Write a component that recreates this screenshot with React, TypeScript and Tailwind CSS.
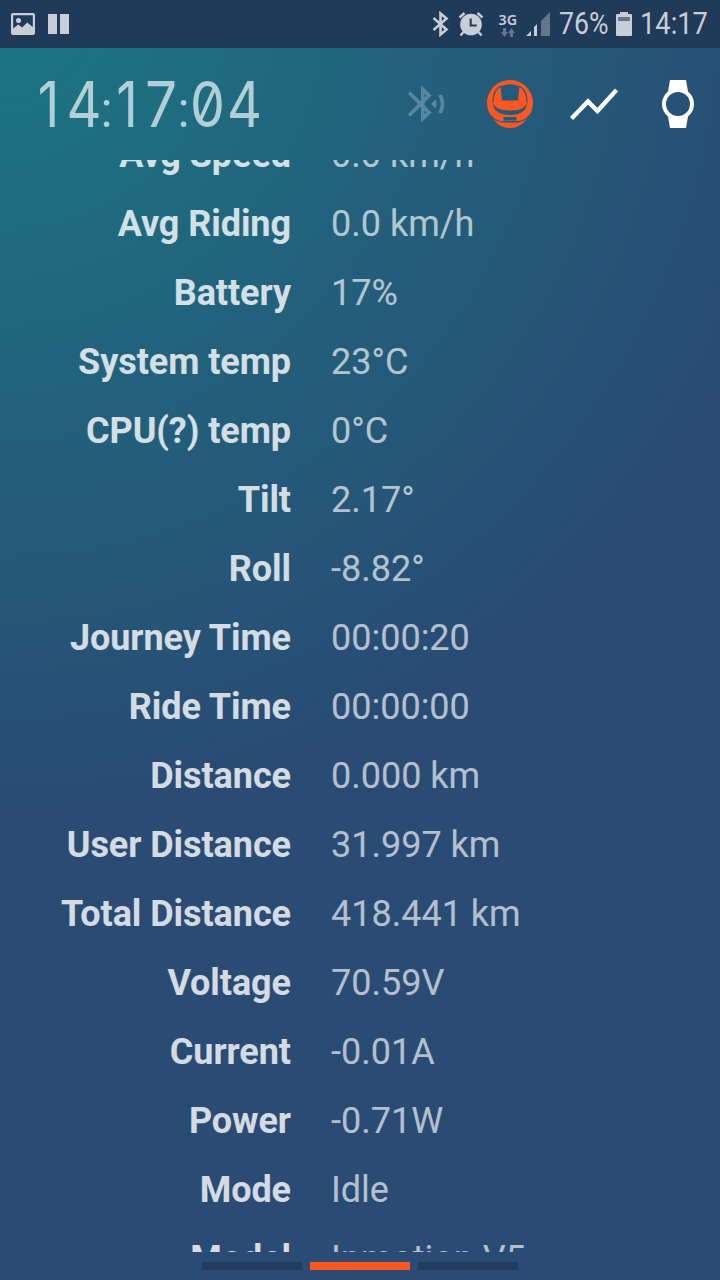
import type { ReactNode } from "react";

const ROWS = [
  ["Avg Speed", "0.0 km/h"],
  ["Avg Riding", "0.0 km/h"],
  ["Battery", "17%"],
  ["System temp", "23°C"],
  ["CPU(?) temp", "0°C"],
  ["Tilt", "2.17°"],
  ["Roll", "-8.82°"],
  ["Journey Time", "00:00:20"],
  ["Ride Time", "00:00:00"],
  ["Distance", "0.000 km"],
  ["User Distance", "31.997 km"],
  ["Total Distance", "418.441 km"],
  ["Voltage", "70.59V"],
  ["Current", "-0.01A"],
  ["Power", "-0.71W"],
  ["Mode", "Idle"],
  ["Model", "Inmotion V5"],
];

const StatusBar = () => (
  <div className="flex h-12 shrink-0 items-center bg-[#203a5a] pr-[9px] text-[#c8ced7]">
    <svg className="ml-[11px] h-6 w-6" viewBox="0 0 24 24" fill="currentColor">
      <path fillRule="evenodd" d="M2 1h20q2 0 2 2v18q0 2-2 2H2q-2 0-2-2V3q0-2 2-2zM2.200 3.200v13.300l5-4 4 3 5-5 5.600 4.500V3.200z" />
      <circle cx="7.500" cy="8.500" r="2.500" />
    </svg>
    <svg className="ml-[13px] h-5 w-[21px]" viewBox="0 0 21 20" fill="currentColor">
      <path d="M0 0h9v20H0zM12 0h9v20h-9z" />
    </svg>
    <div className="flex-1" />
    <svg className="h-[26px] w-[17px]" viewBox="0 0 17 26" fill="none" stroke="currentColor" strokeWidth="2.600">
      <path d="M1.500 7l13 11.500-6 5V2.500l6 5L1.500 19" />
    </svg>
    <svg className="ml-[9px] h-[26px] w-[26px]" viewBox="0 0 26 26">
      <circle cx="13" cy="13.500" r="10.800" fill="currentColor" />
      <path d="M1.500 6.500l5-4.500M24.500 6.500l-5-4.500M5.500 21l-3 3.500M20.500 21l3 3.500" stroke="currentColor" strokeWidth="2.400" />
      <path d="M12.700 7.500v7h6" fill="none" stroke="#203a5a" strokeWidth="2" />
    </svg>
    <div className="ml-[14px] flex w-5 flex-col items-center">
      <span className="origin-center scale-x-[0.95] font-['Noto_Sans',sans-serif] text-[15px] font-semibold leading-[14px]">3G</span>
      <svg className="mt-0.5 h-[9px] w-4" viewBox="0 0 16 9" fill="#64768c">
        <path d="M3 0h3v4h2L4.500 9 1 4h2zM10 9h3V5h2l-3.500-5L8 5h2z" />
      </svg>
    </div>
    <svg className="ml-[8px] h-6 w-6" viewBox="0 0 24 24" fill="currentColor">
      <path d="M0 24l5-5v5zM8 24V15l3-3v12z" />
      <path d="M15 24V9l9-9v24z" fill="#64768c" />
    </svg>
    <span className="ml-[9px] w-[50px] whitespace-nowrap">
      <span className="inline-block origin-left scale-x-[0.86] text-[31px] leading-[50px]">76%</span>
    </span>
    <svg className="ml-[7px] h-6 w-4" viewBox="0 0 16 24" fill="currentColor">
      <path d="M4 0h8v2h3q1 0 1 1v20q0 1-1 1H1q-1 0-1-1V3q0-1 1-1h3z" />
      <path d="M2 5h12v4H2z" fill="#64768c" />
    </svg>
    <span className="ml-[8px] w-[71px] whitespace-nowrap">
      <span className="inline-block origin-left scale-x-[0.88] text-[31px] leading-[50px]">14:17</span>
    </span>
  </div>
);

const Digit = ({ className, children }: { className: string; children: ReactNode }) => (
  <span className={`flex shrink-0 justify-center ${className}`}>{children}</span>
);

const Colon = ({ className }: { className: string }) => (
  <span className={`flex shrink-0 justify-center font-['Roboto',sans-serif] text-[50px] leading-none ${className}`}>:</span>
);

const Header = () => (
  <div className="flex h-28 shrink-0 items-center text-white">
    <div className="ml-[30px] flex w-[231px] items-baseline font-['Inter',sans-serif] text-[63px] leading-[110px] text-[#b2cfd8] [font-feature-settings:'zero']">
      <Digit className="w-[37px] scale-x-[0.84]">1</Digit>
      <Digit className="w-[34px] scale-x-[0.86]">4</Digit>
      <Colon className="w-[11px]" />
      <Digit className="w-[30px] scale-x-[0.84]">1</Digit>
      <Digit className="w-[38px] scale-x-[0.9]">7</Digit>
      <Colon className="w-[7px]" />
      <Digit className="w-[41px] scale-x-[0.88]">0</Digit>
      <Digit className="w-[33px] scale-x-[0.86]">4</Digit>
    </div>
    <svg className="ml-[146px] h-12 w-10" viewBox="0 0 40 48" fill="none" stroke="#5688a0" strokeWidth="3.600">
      <path d="M2 12.500l20 20-6.200 6V9.300l6.200 6.200-20 20" />
      <path d="M33 15q5 9 0 18" />
      <path d="M24 24l4.500-4.500q2 4.500 0 9z" fill="#5688a0" stroke="none" />
    </svg>
    <svg className="ml-10 h-12 w-[46px]" viewBox="0 0 46 48">
      <circle cx="23" cy="23" r="23" fill="#ff5722" />
      <path d="M4 34h38q-6 14-19 14T4 34z" fill="#ff5722" />
      <path d="M14 6Q6 10 6 22M32 6q8 4 8 16" fill="none" stroke="#245b7a" strokeWidth="1.300" />
      <path d="M13.500 6.500Q23 2 32.500 6.500L31 20.500H15z" fill="#245b7a" />
      <path d="M5.500 21q1.500 9.500 17.500 9.500T40.500 21Q40 35 23 35T5.500 21z" fill="#245b7a" />
      <path d="M16.500 37h13v3.500h-13zM13.500 41h19v1.500h-19z" fill="#245b7a" />
      <path d="M3.500 35q3 5 10 6.500M42.500 35q-3 5-10 6.500" fill="none" stroke="#245b7a" strokeWidth="1.200" />
    </svg>
    <svg className="ml-[37px] h-12 w-12" viewBox="0 0 48 48" fill="none" stroke="currentColor" strokeWidth="4.400">
      <path d="M1.500 38.500L18 21.500l9.500 9.500L46.500 10" />
    </svg>
    <svg className="ml-11 h-12 w-8" viewBox="0 0 32 48" fill="currentColor">
      <path fillRule="evenodd" d="M8 0h16l2 11.500a16 16 0 0 1 0 25L24 48H8L6 36.500a16 16 0 0 1 0-25zM16 12a12 12 0 1 0 0 24 12 12 0 0 0 0-24z" />
    </svg>
  </div>
);

const Row = ({ label, value }: { label: string; value: string }) => (
  <div className="flex h-[69px] items-center text-[36px] leading-[42px]">
    <div className="w-[291px] text-right font-bold tracking-[-0.06px] text-white/80">{label}</div>
    <div className="ml-10 whitespace-nowrap text-white/65">{value}</div>
  </div>
);

export default function App() {
  return (
    <div className="flex h-[1280px] w-[720px] flex-col overflow-hidden bg-[#294b74] bg-[radial-gradient(circle_at_0px_0px,#1b7783_0px,#294b74_810px)] font-['Roboto',sans-serif]">
      <StatusBar />
      <Header />
      <div className="h-[1092px] shrink-0 overflow-hidden">
        <div className="-mt-10">
          {ROWS.map(([label, value]) => (
            <Row key={label} label={label} value={value} />
          ))}
        </div>
      </div>
      <div className="mt-2.5 flex justify-center gap-2">
        <div className="h-2 w-[100px] bg-[#203d5d]" />
        <div className="h-2 w-[100px] bg-[#ff5722]" />
        <div className="h-2 w-[100px] bg-[#203d5d]" />
      </div>
    </div>
  );
}
